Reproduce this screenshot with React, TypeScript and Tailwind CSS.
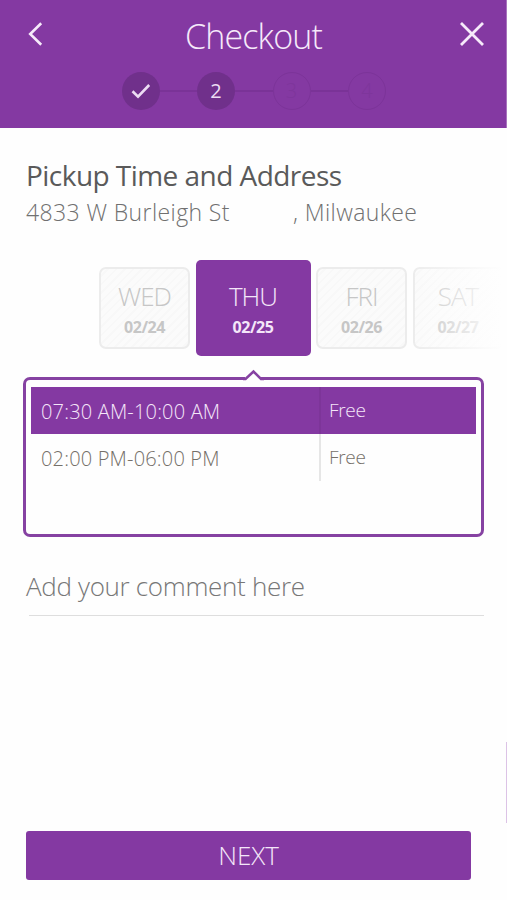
import { useState } from 'react';
import clsx from 'clsx';

const steps = [1, 2, 3, 4];
const currentStep = 2;

const days = [
  { name: 'WED', date: '02/24' },
  { name: 'THU', date: '02/25' },
  { name: 'FRI', date: '02/26' },
  { name: 'SAT', date: '02/27' },
];

const slots = [
  { time: '07:30 AM-10:00 AM', price: 'Free' },
  { time: '02:00 PM-06:00 PM', price: 'Free' },
];

function StepDot({ step }: { step: number }) {
  if (step > currentStep) {
    return (
      <div className="w-[38px] h-[38px] rounded-full border border-[#7c3499] flex items-center justify-center text-[20px] text-[#7e369b]">
        {step}
      </div>
    );
  }
  return (
    <div className="w-[38px] h-[38px] rounded-full bg-[#70308b] flex items-center justify-center text-[20px] leading-none font-normal text-[#ecdcf3]">
      {step < currentStep ? (
        <svg className="w-[20px] h-[16px]" viewBox="0 0 20 16" fill="none" stroke="currentColor" strokeWidth="2.6">
          <path d="M1.5 8.2 7 13.6 18.2 2" />
        </svg>
      ) : (
        step
      )}
    </div>
  );
}

export default function App() {
  const [selectedDay, setSelectedDay] = useState('THU');
  const [selectedSlot, setSelectedSlot] = useState(0);

  return (
    <div className="relative w-[507px] h-[900px] bg-[#fefefe] flex flex-col overflow-hidden font-['Open_Sans',sans-serif] font-light">
      <header className="h-[128px] shrink-0 bg-[#8439a2] text-[#f6eafa] border-r border-[#a874bd]">
        <div className="h-[71px] flex items-center justify-between pl-[28px] pr-[21px]">
          <button className="pb-[4px]" aria-label="Back">
            <svg className="w-[15px] h-[24px]" viewBox="0 0 15 24" fill="none" stroke="currentColor" strokeWidth="2.6">
              <path d="M13.2 1.2 2.2 12 13.2 22.8" />
            </svg>
          </button>
          <h1 className="text-[34px] leading-[46px] tracking-[-0.85px] pl-[5px]">Checkout</h1>
          <button className="pb-[4px]" aria-label="Close">
            <svg className="w-[26px] h-[26px]" viewBox="0 0 26 26" fill="none" stroke="currentColor" strokeWidth="2.8">
              <path d="M2 2 24 24M24 2 2 24" />
            </svg>
          </button>
        </div>
        <div className="flex items-center pl-[121.5px] pt-[0.5px]">
          {steps.map((step, i) => (
            <div key={step} className="flex items-center">
              {i > 0 && <div className="w-[37.5px] h-[2px] bg-[#7a3397]" />}
              <StepDot step={step} />
            </div>
          ))}
        </div>
      </header>

      <section className="pl-[26px] pt-[27px]">
        <h2 className="text-[28px] leading-[40px] tracking-[-0.54px] font-normal text-[#5a5a5a] whitespace-nowrap">
          Pickup Time and Address
        </h2>
        <p className="flex text-[23px] leading-[34px] tracking-[0.4px] text-[#707070] whitespace-nowrap">
          <span className="w-[267px]">4833 W Burleigh St</span>
          <span>, Milwaukee</span>
        </p>
      </section>

      {/* Day picker */}
      <section className="relative h-[96px] mt-[31px] pl-[99px] flex items-center gap-[5.5px] shrink-0 overflow-hidden">
        {days.map((day) => {
          const active = day.name === selectedDay;
          return (
            <button
              key={day.name}
              onClick={() => setSelectedDay(day.name)}
              className={clsx(
                'shrink-0 flex flex-col items-center justify-center pt-[4px]',
                active
                  ? 'w-[115px] h-[96px] rounded-[5px] bg-[#8439a2] text-[#f4e6f9]'
                  : 'w-[91px] h-[82px] rounded-[7px] border-2 border-[#ececec] text-[#c6c6c6] bg-[repeating-linear-gradient(135deg,#fbfbfb_0px,#fbfbfb_4px,#f8f8f8_4px,#f8f8f8_6px)]'
              )}
            >
              <span className="text-[26px] leading-[34px] tracking-[-1px]">{day.name}</span>
              <span className="text-[16px] leading-[28px] tracking-[-0.4px] font-bold">{day.date}</span>
            </button>
          );
        })}
        <div className="absolute right-0 top-0 w-[95px] h-full bg-gradient-to-r from-transparent to-[#fefefe] to-95%" />
      </section>

      {/* Time slots */}
      <section className="relative mt-[21px] ml-[23px] w-[461px] h-[160px] shrink-0 rounded-[7px] border-[3px] border-[#8642a2] pt-[7px] px-[5px]">
        <svg className="absolute left-[216px] top-[-11px] w-[22px] h-[12px]" viewBox="0 0 22 12" fill="none">
          <path d="M3 8H19V12H3Z" fill="#fefefe" />
          <path d="M1 10H3.5L11.5 2.5 19 10H22" stroke="#8642a2" strokeWidth="2.5" />
        </svg>
        {slots.map((slot, i) => (
          <button
            key={slot.time}
            onClick={() => setSelectedSlot(i)}
            className={clsx(
              'w-[445px] h-[47px] flex items-center text-left',
              i === selectedSlot ? 'bg-[#8439a2] text-[#f4e6f9]' : 'text-[#757069]'
            )}
          >
            <span
              className={clsx(
                'w-[290px] h-full border-r-2 pl-[10px] text-[20px] leading-[50px] tracking-[0.18px]',
                i === selectedSlot ? 'border-[#7d3599]' : 'border-[#e6e6e6]'
              )}
            >
              {slot.time}
            </span>
            <span className="pl-[8px] text-[19px] leading-[47px] tracking-[-0.3px]">{slot.price}</span>
          </button>
        ))}
      </section>

      <div className="mt-[30px] ml-[26px] mr-[23px] h-[49px] shrink-0">
        <p className="text-[26px] leading-[38px] tracking-[-0.32px] text-[#777777]">Add your comment here</p>
        <div className="mt-[10px] ml-[3px] h-px bg-[#dedede]" />
      </div>

      <button className="mt-auto mb-[20px] ml-[26px] w-[445px] h-[49px] shrink-0 rounded-[3px] bg-[#8439a2] text-[#f4e6f9] text-[26px] leading-[49px]">
        NEXT
      </button>

      {/* Scroll edge */}
      <div className="absolute right-0 top-[742px] w-px h-[81px] bg-[#dcc3e6]" />
    </div>
  );
}
